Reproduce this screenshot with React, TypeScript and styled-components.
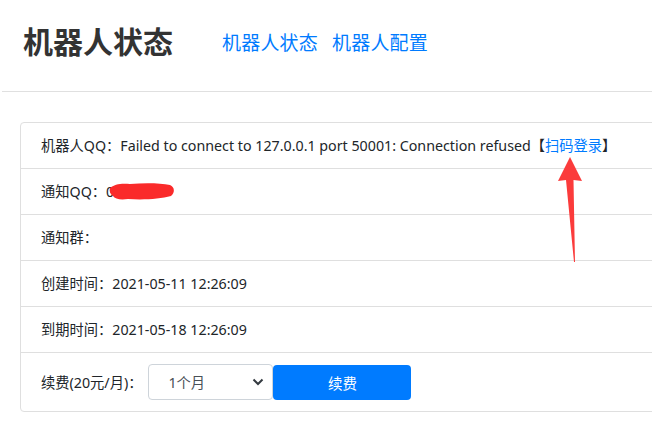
import React from "react";
import styled, { createGlobalStyle } from "styled-components";

const GlobalStyle = createGlobalStyle`
  html, body {
    margin: 0;
    padding: 0;
    background: #fff;
    overflow: hidden;
  }
  body {
    font-family: "Noto Sans", "Noto Sans CJK SC", sans-serif;
    color: #212529;
  }
`;

const Page = styled.div`
  position: relative;
  width: 652px;
  height: 435px;
`;

const Header = styled.header`
  display: flex;
  align-items: center;
  height: 91px;
  padding-left: 20px;
  margin-left: 2px;
  border-bottom: 1px solid #e0e0e0;
`;

const Title = styled.h1`
  margin: 0 0 12px 1px;
  font-family: "Noto Sans CJK SC", sans-serif;
  font-size: 30px;
  font-weight: 700;
  color: #333;
`;

const Nav = styled.nav`
  display: flex;
  gap: 14px;
  margin-left: 49px;
  margin-bottom: 8px;
`;

const NavLink = styled.a`
  font-family: "Noto Sans CJK SC", sans-serif;
  font-size: 19px;
  letter-spacing: 0.2px;
  color: #007bff;
  text-decoration: none;
`;

const Card = styled.ul`
  list-style: none;
  margin: 30px 0 0 20px;
  padding: 0;
  width: 660px;
  border: 1px solid #dfdfdf;
  border-radius: 4px;
`;

const Item = styled.li<{ $pad?: number }>`
  position: relative;
  display: flex;
  align-items: center;
  padding: ${(p) => p.$pad ?? 12}px 20px;
  font-size: 14.25px;
  line-height: 21px;
  & + & {
    border-top: 1px solid #dfdfdf;
  }
`;

const Link = styled.a`
  color: #007bff;
  text-decoration: none;
`;

const Redacted = styled.span`
  position: relative;
  display: inline-block;
`;

const Scribble = styled.svg`
  position: absolute;
  left: 2px;
  top: 1px;
`;

const Select = styled.div`
  display: flex;
  align-items: center;
  justify-content: space-between;
  box-sizing: border-box;
  width: 125px;
  height: 36px;
  margin-left: 6px;
  padding: 0 8px 0 19px;
  border: 1px solid #ced4da;
  border-radius: 4px;
  color: #495057;
`;

const Button = styled.button`
  width: 138px;
  height: 35px;
  margin-left: 0;
  border: none;
  border-radius: 4px;
  background: #007bff;
  color: #fff;
  font-family: "Noto Sans CJK SC", sans-serif;
  font-size: 14.5px;
`;

const Arrow = styled.svg`
  position: absolute;
  left: 555px;
  top: 155px;
`;

export default function App() {
  return (
    <>
      <GlobalStyle />
      <Page>
        <Header>
          <Title>机器人状态</Title>
          <Nav>
            <NavLink href="#">机器人状态</NavLink>
            <NavLink href="#">机器人配置</NavLink>
          </Nav>
        </Header>
        <Card>
          <Item>
            机器人QQ：Failed to connect to 127.0.0.1 port 50001: Connection refused【<Link href="#">扫码登录</Link>】
          </Item>
          <Item>
            通知QQ：
            <Redacted>
              0
              <Scribble width="68" height="20" viewBox="0 0 68 20">
                <path
                  d="M2 6 C6 2 14 1 22 2 C36 1 52 1 62 3 C67 5 67 11 63 14 C52 17 36 18 20 17 C12 18 7 17 5 14 C2 12 1 9 2 6 Z"
                  fill="#fa2a2a"
                />
              </Scribble>
            </Redacted>
          </Item>
          <Item>通知群：</Item>
          <Item>创建时间：2021-05-11 12:26:09</Item>
          <Item>到期时间：2021-05-18 12:26:09</Item>
          <Item $pad={11}>
            续费(20元/月)：
            <Select>
              <span>1个月</span>
              <svg width="12" height="8" viewBox="0 0 12 8">
                <path d="M1.5 1.5 L6 6 L10.5 1.5" fill="none" stroke="#343a40" strokeWidth="2" />
              </svg>
            </Select>
            <Button>续费</Button>
          </Item>
        </Card>
        <Arrow width="30" height="110" viewBox="0 0 30 110">
          <path d="M15 2 L27 26 L18.5 25 L20 107 L19 107 L11 25 L3 26 Z" fill="#fb3b3b" />
        </Arrow>
      </Page>
    </>
  );
}
